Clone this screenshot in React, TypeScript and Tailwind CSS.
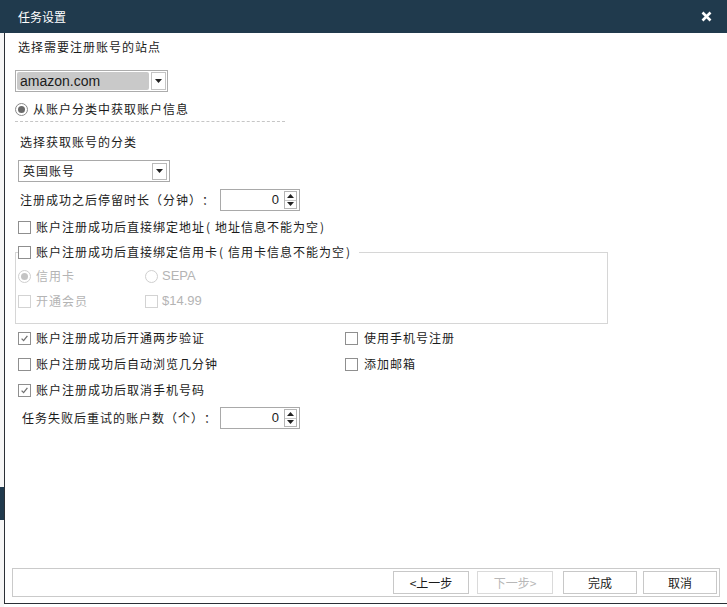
import React from 'react';

function Check({ checked = false, disabled = false }: { checked?: boolean; disabled?: boolean }) {
  return (
    <span
      className={
        disabled
          ? 'w-[13px] h-[13px] border border-[#d3d3d3] bg-white flex items-center justify-center shrink-0'
          : 'w-[13px] h-[13px] border border-[#8f8f8f] bg-white flex items-center justify-center shrink-0'
      }
    >
      {checked && (
        <svg width="9" height="9" viewBox="0 0 9 9">
          <path d="M1.6 4.6 L3.6 6.6 L7.4 1.8" stroke="#707070" strokeWidth="1.3" fill="none" />
        </svg>
      )}
    </span>
  );
}

function Radio({ checked = false, disabled = false }: { checked?: boolean; disabled?: boolean }) {
  return (
    <span
      className={
        disabled
          ? 'w-[13px] h-[13px] rounded-full border border-[#cfcfcf] bg-white flex items-center justify-center shrink-0'
          : 'w-[13px] h-[13px] rounded-full border border-[#8a8a8a] bg-white flex items-center justify-center shrink-0'
      }
    >
      {checked && (
        <span
          className={
            disabled
              ? 'w-[7px] h-[7px] rounded-full bg-[#c4c4c4]'
              : 'w-[7px] h-[7px] rounded-full bg-[#6a6a6a]'
          }
        />
      )}
    </span>
  );
}

function Arrow() {
  return (
    <svg width="7" height="4" viewBox="0 0 7 4">
      <path d="M0 0 H7 L3.5 4 Z" fill="#222" />
    </svg>
  );
}

function Spin() {
  return (
    <div className="w-[80px] h-[22px] border border-[#a9a9a9] bg-white flex items-center">
      <span className="flex-1 text-right pr-[4px] text-[13px] leading-[16px] font-['Liberation_Sans',sans-serif]">0</span>
      <div className="w-[13px] h-[18px] mr-[2px] border border-[#b5b5b5] flex flex-col">
        <div className="flex-1 flex items-center justify-center border-b border-[#c8c8c8]">
          <svg width="7" height="4" viewBox="0 0 7 4">
            <path d="M0 4 H7 L3.5 0 Z" fill="#222" />
          </svg>
        </div>
        <div className="flex-1 flex items-center justify-center">
          <Arrow />
        </div>
      </div>
    </div>
  );
}

function Row({ children, className = '' }: { children: React.ReactNode; className?: string }) {
  return <div className={`h-[16px] flex items-center ${className}`}>{children}</div>;
}

// wide parens, as the original dialog font draws them
const L = () => <span className="pl-[1px] pr-[4px]">(</span>;
const R = () => <span className="pl-[1px] pr-[4px]">)</span>;

export default function App() {
  return (
    <div className="w-[727px] h-[607px] bg-white flex flex-col overflow-hidden text-[#1b1b1b] font-['Noto_Sans_CJK_SC',sans-serif] [text-spacing-trim:space-all]">
      <div className="h-[33px] shrink-0 bg-[#203a4d] flex items-center justify-between pl-[18px] pr-[15px]">
        <span className="text-white text-[12px] leading-[16px]">任务设置</span>
        <svg width="11" height="11" viewBox="0 0 11 11">
          <path d="M1.5 1.5 L9.5 9.5 M9.5 1.5 L1.5 9.5" stroke="#fff" strokeWidth="2.6" />
        </svg>
      </div>

      <div className="flex flex-1 min-h-0">
        <div className="w-[4px] shrink-0 bg-[#f6f6f6] flex flex-col">
          <div className="h-[454px]" />
          <div className="h-[33px] bg-[#203a4d]" />
        </div>

        <div className="flex-1 flex flex-col">
          <div className="h-[571px] border-l border-b border-[#2a2f35] flex flex-col text-[12px] tracking-[1px]">
            <Row className="mt-[6px] ml-[13px]">
              <span>选择需要注册账号的站点</span>
            </Row>

            <div className="mt-[15px] ml-[10px] w-[153px] h-[22px] border border-[#acacac] p-[1px] flex gap-[2px] bg-white">
              <div className="flex-1 bg-[#c9c9c9] rounded-[2px] flex items-center pl-[3px] text-[14px] tracking-normal font-['Liberation_Sans',sans-serif]">
                amazon.com
              </div>
              <div className="w-[15px] border border-[#c4c4c4] flex items-center justify-center">
                <Arrow />
              </div>
            </div>

            <Row className="mt-[9px] ml-[10px] gap-[5px]">
              <Radio checked />
              <span>从账户分类中获取账户信息</span>
            </Row>

            <div className="mt-[4px] ml-[10px] w-[270px] border-t border-dashed border-[#c6c6c6]" />

            <Row className="mt-[12px] ml-[15px]">
              <span>选择获取账号的分类</span>
            </Row>

            <div className="mt-[10px] ml-[13px] w-[152px] h-[22px] border border-[#a9a9a9] flex items-center bg-white">
              <span className="flex-1 pl-[4px]">英国账号</span>
              <div className="w-[15px] h-[17px] mr-[2px] border border-[#b9b9b9] flex items-center justify-center">
                <Arrow />
              </div>
            </div>

            <div className="mt-[7px] h-[22px] flex items-center">
              <span className="w-[215px] pl-[15px] whitespace-nowrap">注册成功之后停留时长（分钟）：</span>
              <Spin />
            </div>

            <Row className="mt-[8px] ml-[13px] gap-[5px]">
              <Check />
              <span>账户注册成功后直接绑定地址<L />地址信息不能为空<R /></span>
            </Row>

            <div className="relative mt-[17px] ml-[10px] w-[593px] h-[72px] border border-[#d6d6d6] pl-[2px] pt-[15px]">
              <div className="absolute -top-[9px] left-[2px] h-[16px] pr-[4px] bg-white flex items-center gap-[5px]">
                <Check />
                <span>账户注册成功后直接绑定信用卡<L />信用卡信息不能为空<R /></span>
              </div>
              <Row className="text-[#b4b4b4]">
                <div className="w-[127px] flex items-center gap-[5px]">
                  <Radio checked disabled />
                  <span>信用卡</span>
                </div>
                <div className="flex items-center gap-[4px]">
                  <Radio disabled />
                  <span className="text-[13px] tracking-normal font-['Liberation_Sans',sans-serif]">SEPA</span>
                </div>
              </Row>
              <Row className="mt-[9px] text-[#b4b4b4]">
                <div className="w-[127px] flex items-center gap-[5px]">
                  <Check disabled />
                  <span>开通会员</span>
                </div>
                <div className="flex items-center gap-[4px]">
                  <Check disabled />
                  <span className="text-[13px] tracking-normal font-['Liberation_Sans',sans-serif]">$14.99</span>
                </div>
              </Row>
            </div>

            <Row className="mt-[6px] ml-[13px]">
              <div className="w-[327px] flex items-center gap-[5px]">
                <Check checked />
                <span>账户注册成功后开通两步验证</span>
              </div>
              <div className="flex items-center gap-[6px]">
                <Check />
                <span>使用手机号注册</span>
              </div>
            </Row>

            <Row className="mt-[10px] ml-[13px]">
              <div className="w-[327px] flex items-center gap-[5px]">
                <Check />
                <span>账户注册成功后自动浏览几分钟</span>
              </div>
              <div className="flex items-center gap-[6px]">
                <Check />
                <span>添加邮箱</span>
              </div>
            </Row>

            <Row className="mt-[10px] ml-[13px] gap-[5px]">
              <Check checked />
              <span>账户注册成功后取消手机号码</span>
            </Row>

            <div className="mt-[9px] h-[22px] flex items-center">
              <span className="w-[215px] pl-[17px] whitespace-nowrap">任务失败后重试的账户数（个）：</span>
              <Spin />
            </div>

            <div className="flex-1" />

            <div className="ml-[7px] mb-[6px] w-[708px] h-[29px] border border-[#cacaca] flex items-center justify-end pr-[2px] tracking-normal">
              <button className="w-[76px] h-[23px] border border-[#c8c8c8] bg-white mr-[8px] text-[12px]">&lt;上一步</button>
              <button className="w-[76px] h-[23px] border border-[#dadada] bg-white mr-[10px] text-[12px] text-[#b8b8b8]">下一步&gt;</button>
              <button className="w-[74px] h-[23px] border border-[#c8c8c8] bg-white mr-[6px] text-[12px]">完成</button>
              <button className="w-[74px] h-[23px] border border-[#c8c8c8] bg-white text-[12px]">取消</button>
            </div>
          </div>
        </div>
      </div>
    </div>
  );
}
